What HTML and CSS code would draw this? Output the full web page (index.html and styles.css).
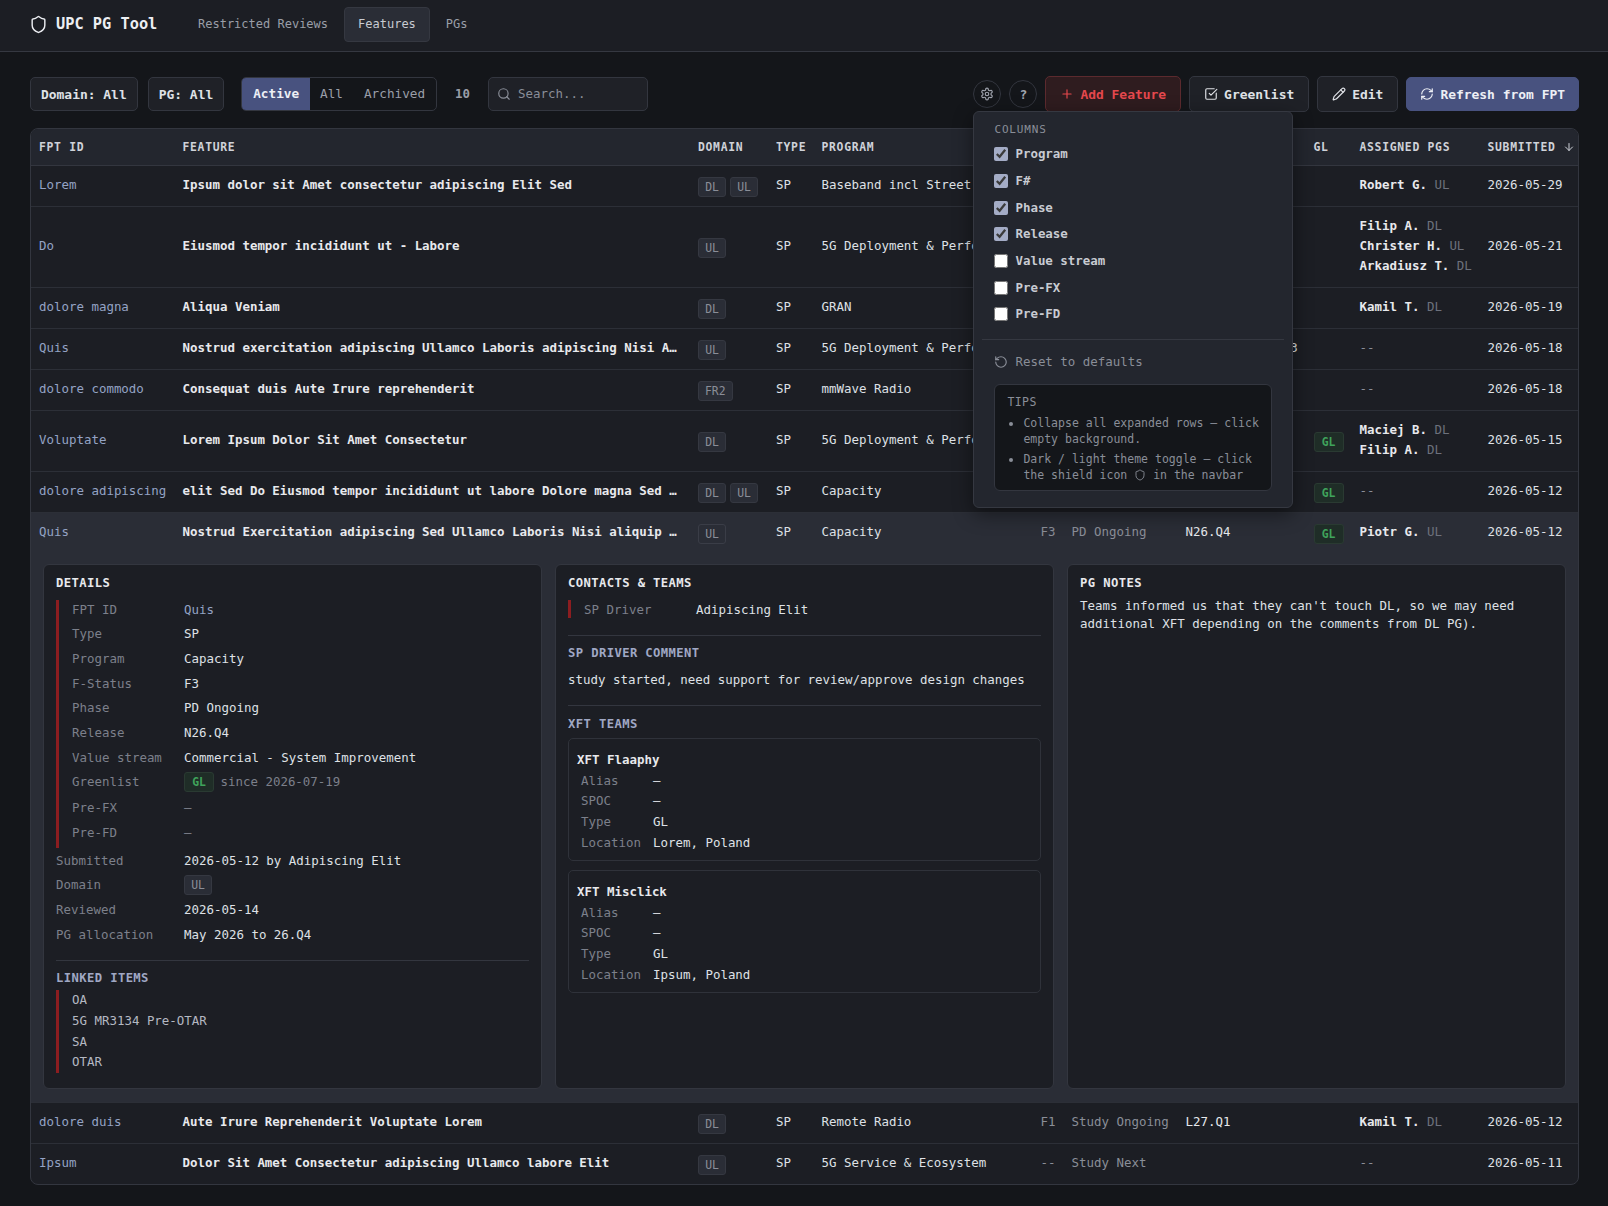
FILE: index.html

```html
<!DOCTYPE html>
<html lang="en">
<head>
    <meta charset="UTF-8">
    <title>UPC PG Tool</title>
    <link rel="stylesheet" href="styles.css">
</head>
<body>
    <nav class="navbar">
        <div class="brand">
            <svg class="icon icon-brand" viewBox="0 0 24 24"><path d="M20 13c0 5-3.5 7.5-7.66 8.95a1 1 0 0 1-.67-.01C7.5 20.5 4 18 4 13V6a1 1 0 0 1 1-1c2 0 4.5-1.2 6.24-2.72a1.17 1.17 0 0 1 1.52 0C14.51 3.81 17 5 19 5a1 1 0 0 1 1 1z"/></svg>
            <span>UPC PG Tool</span>
        </div>
        <a class="nav-link">Restricted Reviews</a>
        <a class="nav-link active">Features</a>
        <a class="nav-link">PGs</a>
    </nav>

    <main class="content">
        <div class="toolbar">
            <button class="btn filter">Domain: All</button>
            <button class="btn filter">PG: All</button>
            <div class="segment">
                <span class="segment-item active">Active</span>
                <span class="segment-item">All</span>
                <span class="segment-item">Archived</span>
            </div>
            <span class="count">10</span>
            <div class="search">
                <svg class="icon" viewBox="0 0 24 24"><circle cx="11" cy="11" r="8"/><path d="m21 21-4.3-4.3"/></svg>
                <span>Search...</span>
            </div>

            <div class="actions">
                <button class="round-btn">
                    <svg class="icon" viewBox="0 0 24 24"><path d="M12.22 2h-.44a2 2 0 0 0-2 2v.18a2 2 0 0 1-1 1.73l-.43.25a2 2 0 0 1-2 0l-.15-.08a2 2 0 0 0-2.73.73l-.22.38a2 2 0 0 0 .73 2.73l.15.1a2 2 0 0 1 1 1.72v.51a2 2 0 0 1-1 1.74l-.15.09a2 2 0 0 0-.73 2.73l.22.38a2 2 0 0 0 2.73.73l.15-.08a2 2 0 0 1 2 0l.43.25a2 2 0 0 1 1 1.73V20a2 2 0 0 0 2 2h.44a2 2 0 0 0 2-2v-.18a2 2 0 0 1 1-1.73l.43-.25a2 2 0 0 1 2 0l.15.08a2 2 0 0 0 2.73-.73l.22-.39a2 2 0 0 0-.73-2.73l-.15-.08a2 2 0 0 1-1-1.74v-.5a2 2 0 0 1 1-1.74l.15-.09a2 2 0 0 0 .73-2.73l-.22-.38a2 2 0 0 0-2.73-.73l-.15.08a2 2 0 0 1-2 0l-.43-.25a2 2 0 0 1-1-1.73V4a2 2 0 0 0-2-2z"/><circle cx="12" cy="12" r="3"/></svg>
                </button>
                <button class="round-btn">?</button>
                <button class="btn action danger">
                    <svg class="icon" viewBox="0 0 24 24"><path d="M5 12h14"/><path d="M12 5v14"/></svg>
                    Add Feature
                </button>
                <button class="btn action">
                    <svg class="icon" viewBox="0 0 24 24"><path d="M21 10.5V19a2 2 0 0 1-2 2H5a2 2 0 0 1-2-2V5a2 2 0 0 1 2-2h12.5"/><path d="m9 11 3 3L22 4"/></svg>
                    Greenlist
                </button>
                <button class="btn action">
                    <svg class="icon" viewBox="0 0 24 24"><path d="M21.174 6.812a1 1 0 0 0-3.986-3.987L3.842 16.174a2 2 0 0 0-.5.83l-1.321 4.352a.5.5 0 0 0 .623.622l4.353-1.32a2 2 0 0 0 .83-.497z"/><path d="m15 5 4 4"/></svg>
                    Edit
                </button>
                <button class="btn action primary">
                    <svg class="icon" viewBox="0 0 24 24"><path d="M3 12a9 9 0 0 1 9-9 9.75 9.75 0 0 1 6.74 2.74L21 8"/><path d="M21 3v5h-5"/><path d="M21 12a9 9 0 0 1-9 9 9.75 9.75 0 0 1-6.74-2.74L3 16"/><path d="M8 16H3v5"/></svg>
                    Refresh from FPT
                </button>

                <div class="columns-menu">
                    <div class="menu-title">COLUMNS</div>
                    <label class="menu-check"><input type="checkbox" checked>Program</label>
                    <label class="menu-check"><input type="checkbox" checked>F#</label>
                    <label class="menu-check"><input type="checkbox" checked>Phase</label>
                    <label class="menu-check"><input type="checkbox" checked>Release</label>
                    <label class="menu-check"><input type="checkbox">Value stream</label>
                    <label class="menu-check"><input type="checkbox">Pre-FX</label>
                    <label class="menu-check"><input type="checkbox">Pre-FD</label>
                    <div class="menu-divider"></div>
                    <div class="menu-reset">
                        <svg class="icon" viewBox="0 0 24 24"><path d="M3 12a9 9 0 1 0 9-9 9.75 9.75 0 0 0-6.74 2.74L3 8"/><path d="M3 3v5h5"/></svg>
                        Reset to defaults
                    </div>
                    <div class="tips">
                        <div class="tips-title">TIPS</div>
                        <ul>
                            <li>Collapse all expanded rows — click empty background.</li>
                            <li>Dark / light theme toggle — click the shield icon <svg class="icon icon-inline" viewBox="0 0 24 24"><path d="M20 13c0 5-3.5 7.5-7.66 8.95a1 1 0 0 1-.67-.01C7.5 20.5 4 18 4 13V6a1 1 0 0 1 1-1c2 0 4.5-1.2 6.24-2.72a1.17 1.17 0 0 1 1.52 0C14.51 3.81 17 5 19 5a1 1 0 0 1 1 1z"/></svg> in the navbar</li>
                        </ul>
                    </div>
                </div>
            </div>
        </div>

        <div class="table-wrap">
            <table class="features">
                <colgroup>
                    <col class="c-id"><col class="c-feature"><col class="c-domain"><col class="c-type"><col class="c-program"><col class="c-fnum"><col class="c-phase"><col class="c-release"><col class="c-gl"><col class="c-pgs"><col class="c-date">
                </colgroup>
                <thead>
                    <tr>
                        <th>FPT ID</th><th>FEATURE</th><th>DOMAIN</th><th>TYPE</th><th>PROGRAM</th><th class="num">F#</th><th>PHASE</th><th>RELEASE</th><th>GL</th><th>ASSIGNED PGS</th>
                        <th>SUBMITTED <svg class="icon icon-sort" viewBox="0 0 24 24"><path d="M12 5v14"/><path d="m19 12-7 7-7-7"/></svg></th>
                    </tr>
                </thead>
                <tbody>
                    <tr>
                        <td class="id">Lorem</td>
                        <td class="feature">Ipsum dolor sit Amet consectetur adipiscing Elit Sed</td>
                        <td><span class="badge">DL</span><span class="badge">UL</span></td>
                        <td>SP</td><td>Baseband incl Street Macro</td><td class="num muted"></td><td class="muted"></td><td></td><td></td>
                        <td><div class="pg"><b>Robert G.</b> <span>UL</span></div></td>
                        <td>2026-05-29</td>
                    </tr>
                    <tr>
                        <td class="id">Do</td>
                        <td class="feature">Eiusmod tempor incididunt ut - Labore</td>
                        <td><span class="badge">UL</span></td>
                        <td>SP</td><td>5G Deployment &amp; Performance</td><td class="num muted"></td><td class="muted"></td><td></td><td></td>
                        <td><div class="pg"><b>Filip A.</b> <span>DL</span></div><div class="pg"><b>Christer H.</b> <span>UL</span></div><div class="pg"><b>Arkadiusz T.</b> <span>DL</span></div></td>
                        <td>2026-05-21</td>
                    </tr>
                    <tr>
                        <td class="id">dolore magna</td>
                        <td class="feature">Aliqua Veniam</td>
                        <td><span class="badge">DL</span></td>
                        <td>SP</td><td>GRAN</td><td class="num muted"></td><td class="muted"></td><td></td><td></td>
                        <td><div class="pg"><b>Kamil T.</b> <span>DL</span></div></td>
                        <td>2026-05-19</td>
                    </tr>
                    <tr>
                        <td class="id">Quis</td>
                        <td class="feature">Nostrud exercitation adipiscing Ullamco Laboris adipiscing Nisi A…</td>
                        <td><span class="badge">UL</span></td>
                        <td>SP</td><td>5G Deployment &amp; Performance</td><td class="num muted"></td><td class="muted"></td><td class="wide">N26.Q4 / N27.Q3</td><td></td>
                        <td class="muted">--</td>
                        <td>2026-05-18</td>
                    </tr>
                    <tr>
                        <td class="id">dolore commodo</td>
                        <td class="feature">Consequat duis Aute Irure reprehenderit</td>
                        <td><span class="badge">FR2</span></td>
                        <td>SP</td><td>mmWave Radio</td><td class="num muted"></td><td class="muted"></td><td></td><td></td>
                        <td class="muted">--</td>
                        <td>2026-05-18</td>
                    </tr>
                    <tr>
                        <td class="id">Voluptate</td>
                        <td class="feature">Lorem Ipsum Dolor Sit Amet Consectetur</td>
                        <td><span class="badge">DL</span></td>
                        <td>SP</td><td>5G Deployment &amp; Performance</td><td class="num muted"></td><td class="muted"></td><td></td>
                        <td><span class="badge green">GL</span></td>
                        <td><div class="pg"><b>Maciej B.</b> <span>DL</span></div><div class="pg"><b>Filip A.</b> <span>DL</span></div></td>
                        <td>2026-05-15</td>
                    </tr>
                    <tr>
                        <td class="id">dolore adipiscing</td>
                        <td class="feature">elit Sed Do Eiusmod tempor incididunt ut labore Dolore magna Sed …</td>
                        <td><span class="badge">DL</span><span class="badge">UL</span></td>
                        <td>SP</td><td>Capacity</td><td class="num muted"></td><td class="muted"></td><td></td>
                        <td><span class="badge green">GL</span></td>
                        <td class="muted">--</td>
                        <td>2026-05-12</td>
                    </tr>
                    <tr class="open">
                        <td class="id">Quis</td>
                        <td class="feature">Nostrud Exercitation adipiscing Sed Ullamco Laboris Nisi aliquip …</td>
                        <td><span class="badge">UL</span></td>
                        <td>SP</td><td>Capacity</td><td class="num muted">F3</td><td class="muted">PD Ongoing</td><td class="strong">N26.Q4</td>
                        <td><span class="badge green">GL</span></td>
                        <td><div class="pg"><b>Piotr G.</b> <span>UL</span></div></td>
                        <td>2026-05-12</td>
                    </tr>
                    <tr class="detail-row">
                        <td colspan="11">
                            <div class="panels">
                                <section class="panel">
                                    <h4>DETAILS</h4>
                                    <div class="accent-block">
                                        <div class="kv"><span>FPT ID</span><span class="id">Quis</span></div>
                                        <div class="kv"><span>Type</span><span>SP</span></div>
                                        <div class="kv"><span>Program</span><span>Capacity</span></div>
                                        <div class="kv"><span>F-Status</span><span>F3</span></div>
                                        <div class="kv"><span>Phase</span><span>PD Ongoing</span></div>
                                        <div class="kv"><span>Release</span><span>N26.Q4</span></div>
                                        <div class="kv"><span>Value stream</span><span>Commercial - System Improvement</span></div>
                                        <div class="kv kv-tall"><span>Greenlist</span><span class="kv-gl"><span class="badge green">GL</span> since 2026-07-19</span></div>
                                        <div class="kv"><span>Pre-FX</span><span class="dim">—</span></div>
                                        <div class="kv"><span>Pre-FD</span><span class="dim">—</span></div>
                                    </div>
                                    <div class="plain-block">
                                        <div class="kv"><span>Submitted</span><span>2026-05-12 by Adipiscing Elit</span></div>
                                        <div class="kv"><span>Domain</span><span><span class="badge">UL</span></span></div>
                                        <div class="kv"><span>Reviewed</span><span>2026-05-14</span></div>
                                        <div class="kv"><span>PG allocation</span><span>May 2026 to 26.Q4</span></div>
                                    </div>
                                    <div class="panel-divider"></div>
                                    <h5>LINKED ITEMS</h5>
                                    <div class="linked">
                                        <div>OA</div>
                                        <div>5G MR3134 Pre-OTAR</div>
                                        <div>SA</div>
                                        <div>OTAR</div>
                                    </div>
                                </section>
                                <section class="panel">
                                    <h4>CONTACTS &amp; TEAMS</h4>
                                    <div class="accent-block driver">
                                        <div class="kv"><span>SP Driver</span><span>Adipiscing Elit</span></div>
                                    </div>
                                    <div class="panel-divider"></div>
                                    <h5>SP DRIVER COMMENT</h5>
                                    <p class="comment">study started, need support for review/approve design changes</p>
                                    <div class="panel-divider"></div>
                                    <h5 class="xft-title">XFT TEAMS</h5>
                                    <div class="team">
                                        <div class="team-name">XFT Flaaphy</div>
                                        <div class="team-kv"><span>Alias</span><span>—</span></div>
                                        <div class="team-kv"><span>SPOC</span><span>—</span></div>
                                        <div class="team-kv"><span>Type</span><span>GL</span></div>
                                        <div class="team-kv"><span>Location</span><span>Lorem, Poland</span></div>
                                    </div>
                                    <div class="team">
                                        <div class="team-name">XFT Misclick</div>
                                        <div class="team-kv"><span>Alias</span><span>—</span></div>
                                        <div class="team-kv"><span>SPOC</span><span>—</span></div>
                                        <div class="team-kv"><span>Type</span><span>GL</span></div>
                                        <div class="team-kv"><span>Location</span><span>Ipsum, Poland</span></div>
                                    </div>
                                </section>
                                <section class="panel">
                                    <h4>PG NOTES</h4>
                                    <p class="notes">Teams informed us that they can't touch DL, so we may need additional XFT depending on the comments from DL PG).</p>
                                </section>
                            </div>
                        </td>
                    </tr>
                    <tr>
                        <td class="id">dolore duis</td>
                        <td class="feature">Aute Irure Reprehenderit Voluptate Lorem</td>
                        <td><span class="badge">DL</span></td>
                        <td>SP</td><td>Remote Radio</td><td class="num muted">F1</td><td class="muted">Study Ongoing</td><td class="strong">L27.Q1</td><td></td>
                        <td><div class="pg"><b>Kamil T.</b> <span>DL</span></div></td>
                        <td>2026-05-12</td>
                    </tr>
                    <tr>
                        <td class="id">Ipsum</td>
                        <td class="feature">Dolor Sit Amet Consectetur adipiscing Ullamco labore Elit</td>
                        <td><span class="badge">UL</span></td>
                        <td>SP</td><td>5G Service &amp; Ecosystem</td><td class="num muted">--</td><td class="muted">Study Next</td><td></td><td></td>
                        <td class="muted">--</td>
                        <td>2026-05-11</td>
                    </tr>
                </tbody>
            </table>
        </div>
    </main>
</body>
</html>
```

FILE: styles.css

```css
* {
    margin: 0;
    padding: 0;
    box-sizing: border-box;
}

body {
    font-family: "DejaVu Sans Mono", "Liberation Mono", monospace;
    font-size: 12.45px;
    line-height: 20px;
    background: #14161a;
    color: #dfe1e6;
    min-height: 100vh;
}

button {
    font-family: inherit;
    color: inherit;
}

.icon {
    width: 14px;
    height: 14px;
    fill: none;
    stroke: currentColor;
    stroke-width: 2;
    stroke-linecap: round;
    stroke-linejoin: round;
    flex: none;
}

/* navbar */
.navbar {
    height: 52px;
    display: flex;
    align-items: center;
    padding: 0 30px 3px;
    background: #1c1e24;
    border-bottom: 1px solid #353841;
}

.brand {
    display: flex;
    align-items: center;
    gap: 8px;
    width: 158px;
    margin-right: 1px;
    font-size: 15.3px;
    font-weight: bold;
    color: #eceef2;
}

.icon-brand {
    width: 19px;
    height: 19px;
    margin-left: -1px;
    stroke-width: 1.8;
}

.nav-link {
    padding: 0 8px;
    margin-right: 7px;
    height: 35px;
    line-height: 33px;
    font-size: 12px;
    color: #9a9ea8;
    border: 1px solid transparent;
    border-radius: 4px;
}

.nav-link.active {
    padding: 0 13px;
    margin-right: 7px;
    background: #2a2d36;
    border-color: #353841;
    color: #c8cbd2;
}

/* toolbar */
.content {
    padding: 24px 29px 20px 30px;
}

.toolbar {
    display: flex;
    align-items: center;
    height: 36px;
    margin-bottom: 16px;
}

.btn {
    display: flex;
    align-items: center;
    justify-content: center;
    gap: 6px;
    height: 34px;
    padding: 0 10px;
    font-size: 12.95px;
    font-weight: bold;
    background: #1f2127;
    border: 1px solid #33363f;
    border-radius: 5px;
    color: #dfe1e6;
}

.filter {
    margin-right: 10px;
}

.filter + .segment {
    margin-left: 7px;
}

.segment {
    display: flex;
    height: 34px;
    line-height: 32px;
    background: #14161a;
    border: 1px solid #33363f;
    border-radius: 5px;
    overflow: hidden;
    font-size: 12.7px;
    color: #9a9ea8;
}

.segment-item {
    padding: 0 10px;
}

.segment-item.active {
    padding: 0 11px;
    background: #48527f;
    color: #edeff5;
    font-weight: bold;
}

.segment-item + .segment-item + .segment-item {
    padding: 0 11px;
}

.count {
    margin: 0 18px 0 18px;
    font-weight: bold;
    color: #9a9ea8;
}

.search {
    display: flex;
    align-items: center;
    gap: 7px;
    width: 160px;
    height: 34px;
    padding: 0 8px;
    background: #1f2127;
    border: 1px solid #33363f;
    border-radius: 5px;
    color: #8a8e98;
}

.actions {
    position: relative;
    display: flex;
    align-items: center;
    gap: 8px;
    margin-left: auto;
}

.round-btn {
    display: flex;
    align-items: center;
    justify-content: center;
    width: 28px;
    height: 28px;
    border-radius: 50%;
    background: #14161a;
    border: 1px solid #33363f;
    color: #a0a4ae;
    font-size: 13px;
    font-weight: bold;
}

.action {
    height: 36px;
    padding: 0 14px;
}

.danger {
    background: #2f1c1f;
    border-color: #5c2a2e;
    color: #e5484d;
}

.primary {
    height: 34px;
    padding: 0 13px;
    background: #48527f;
    border-color: #48527f;
    color: #edeff5;
}

/* columns dropdown */
.columns-menu {
    position: absolute;
    top: 35px;
    left: 0;
    width: 320px;
    height: 397px;
    padding: 8px 20px;
    background: #23262e;
    border: 1px solid #353841;
    border-radius: 6px;
    box-shadow: 0 6px 20px rgba(0, 0, 0, 0.45);
    z-index: 10;
}

.menu-title {
    font-size: 11px;
    letter-spacing: 0.85px;
    color: #8a8e98;
    margin-bottom: 1px;
}

.menu-check {
    display: flex;
    align-items: center;
    gap: 7px;
    height: 26.7px;
    font-size: 12.45px;
    font-weight: bold;
    color: #c8cbd2;
}

.menu-check input {
    width: 14px;
    height: 14px;
    margin: 0;
    accent-color: #a4acc6;
}

.menu-divider {
    height: 1px;
    margin: 11px -12px 12px;
    background: #353841;
}

.menu-reset {
    display: flex;
    align-items: center;
    gap: 7px;
    font-size: 12.45px;
    color: #8a8e98;
}

.icon-inline {
    width: 12px;
    height: 12px;
    stroke-width: 1.8;
    vertical-align: -2px;
}

.tips {
    margin-top: 12px;
    width: 278px;
    height: 107px;
    padding: 10px 12px 8px;
    background: #14161a;
    border: 1px solid #33363f;
    border-radius: 6px;
    color: #8a8e98;
    font-size: 11.5px;
    line-height: 15.5px;
}

.tips-title {
    margin-bottom: 6px;
    font-size: 11.5px;
    letter-spacing: 0.4px;
}

.tips ul {
    padding-left: 16px;
}

.tips li + li {
    margin-top: 5px;
}

/* table */
.table-wrap {
    background: #1c1e24;
    border: 1px solid #33363f;
    border-radius: 8px;
    overflow: hidden;
}

.features {
    width: 100%;
    border-collapse: collapse;
    table-layout: fixed;
}

.c-id { width: 143.5px; }
.c-feature { width: 515.5px; }
.c-domain { width: 78px; }
.c-type { width: 45.5px; }
.c-program { width: 212px; }
.c-fnum { width: 38px; }
.c-phase { width: 114px; }
.c-release { width: 128px; }
.c-gl { width: 46px; }
.c-pgs { width: 128px; }

th {
    height: 36px;
    padding: 0 8px;
    text-align: left;
    font-size: 11.4px;
    letter-spacing: 0.7px;
    font-weight: bold;
    color: #cfd2d9;
    background: #23262e;
    border-bottom: 1px solid #33363f;
    white-space: nowrap;
}

.icon-sort {
    width: 12px;
    height: 12px;
    vertical-align: -2px;
}

td {
    padding: 9px 8px 11px;
    vertical-align: middle;
    border-bottom: 1px solid #2c2f37;
    white-space: nowrap;
}

tbody tr:last-child td {
    border-bottom: none;
}

td .badge {
    vertical-align: top;
    margin-top: 2px;
    margin-bottom: -2px;
}

.kv .badge {
    margin-top: 0;
    margin-bottom: 0;
}

.num {
    text-align: right;
}

.muted {
    color: #8a8e98;
}

.strong {
    color: #e6e8ec;
}

.wide {
    overflow: visible;
}

.id {
    color: #94a3c4;
}

.feature {
    padding-right: 8px;
    overflow: hidden;
    font-weight: bold;
    color: #e8e9ed;
}

.badge {
    display: inline-block;
    height: 20px;
    min-width: 28px;
    padding: 0 6px;
    margin-right: 4px;
    font-size: 11.4px;
    line-height: 18px;
    text-align: center;
    color: #8a8e98;
    background: #2a2d36;
    border: 1px solid #353841;
    border-radius: 3px;
}

.badge.green {
    min-width: 30px;
    margin-right: 0;
    font-weight: bold;
    color: #3fa35b;
    background: #1f2d27;
    border-color: #2a3a32;
}

.pg b {
    color: #e8e9ed;
}

.pg span {
    color: #6d717c;
}

.open td {
    background: #2a2d36;
    border-bottom: none;
}

.open .badge:not(.green) {
    background: #2a2d36;
    border-color: #3a3d47;
}

/* expanded row */
.detail-row td {
    padding: 11px 12px 13px;
    background: #2a2d36;
    white-space: normal;
}

.panels {
    display: grid;
    grid-template-columns: repeat(3, 1fr);
    gap: 13px;
}

.panel {
    height: 525px;
    padding: 8px 12px;
    background: #1c1e24;
    border: 1px solid #33363f;
    border-radius: 6px;
}

h4 {
    font-size: 12.2px;
    letter-spacing: 0.4px;
    color: #e8e9ed;
    margin-bottom: 7px;
}

h5 {
    font-size: 12.2px;
    letter-spacing: 0.4px;
    color: #a0a8c4;
    margin-bottom: 4px;
}

.xft-title {
    margin-top: 8px;
}

.accent-block {
    padding-left: 13px;
    border-left: 3px solid #8c1d20;
}

.kv {
    display: flex;
    align-items: flex-start;
    height: 24.7px;
}

.kv-tall {
    height: 26px;
}

.kv > span:first-child {
    flex: none;
    width: 112px;
    color: #7c808b;
}

.plain-block {
    margin: 3px 0 11px;
}

.plain-block .kv > span:first-child {
    width: 128px;
}

.kv-gl {
    color: #7c808b;
}

.kv-gl .badge {
    margin-right: -1px;
}

.dim {
    color: #7c808b;
}

.panel-divider {
    height: 1px;
    margin: 9px 0 7px;
    background: #33363f;
}

.linked {
    margin-top: -2px;
    padding-left: 13px;
    border-left: 3px solid #8c1d20;
    color: #b4b8c2;
    line-height: 20.6px;
}

.driver {
    margin-bottom: 17px;
}

.driver .kv {
    height: 18px;
}

.driver .kv > span:first-child {
    width: 112px;
}

.comment {
    margin: 7px 0 15px;
    color: #dfe1e6;
}

.team {
    height: 123px;
    padding: 11px 8px 8px;
    margin: 4px 0 9px;
    border: 1px solid #2f323a;
    border-radius: 5px;
}

.team-name {
    font-weight: bold;
    color: #e8e9ed;
    margin-bottom: 1px;
}

.team-kv {
    display: flex;
    height: 20.7px;
    padding-left: 4px;
}

.team-kv > span:first-child {
    width: 72px;
    color: #7c808b;
}

.notes {
    margin-top: -3px;
    line-height: 18px;
    color: #dfe1e6;
}
```
